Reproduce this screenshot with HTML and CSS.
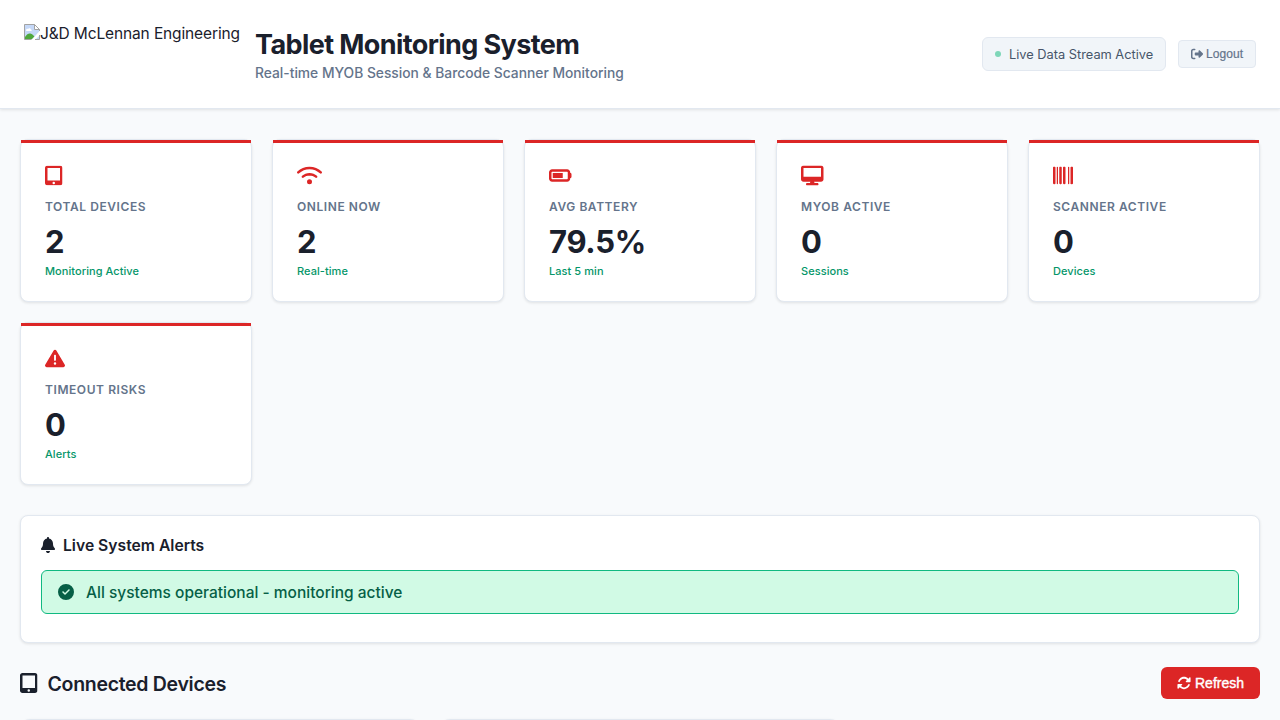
FILE: index.html
```html
<!DOCTYPE html>
<html lang="en">
<head>
<meta charset="utf-8">
<title>Tablet Monitoring System</title>
<link rel="stylesheet" href="styles.css">
</head>
<body>
<svg class="sprite" aria-hidden="true">
  <symbol id="tablet" viewBox="0 0 448 512"><path d="M0 64C0 28.7 28.7 0 64 0H384c35.3 0 64 28.7 64 64V448c0 35.3-28.7 64-64 64H64c-35.3 0-64-28.7-64-64V64zM256 448a32 32 0 1 0 -64 0 32 32 0 1 0 64 0zM384 64H64V384H384V64z"/></symbol>
</svg>
<header class="header">
  <div class="brand">
    <div class="logo">
      <svg class="logo-missing" viewBox="0 0 16 16" width="16" height="16">
        <path d="M.5.5h10l5 5v10H.5z" fill="#c5d8f8"/>
        <path d="M2 6.5c0-1.5 1.3-2 2-1.4.5-1.4 2.7-1.2 2.8.3 1.2 0 1.3 1.6.2 1.6H2.5z" fill="#fff"/>
        <path d="M1 15v-2c2-3 4-4 6-3.2 1.6.5 2.5 1.6 3.5 2.7L8 15z" fill="#4fa83d"/>
        <path d="M16 6.5L7.500 16H11l5-5z" fill="#fff"/>
        <path d="M7.500 15.500H.5V.5h10l5 5V7M15.500 11v4.500H11" fill="none" stroke="#a3a3a3"/>
        <path d="M10.500.5v5h5z" fill="#fff" stroke="#a3a3a3"/>
      </svg><span>J&amp;D McLennan Engineering</span>
    </div>
    <div class="titles">
      <h1>Tablet Monitoring System</h1>
      <p>Real-time MYOB Session &amp; Barcode Scanner Monitoring</p>
    </div>
  </div>
  <div class="actions">
    <div class="status"><span class="dot"></span><span>Live Data Stream Active</span></div>
    <button class="logout"><svg class="icon" width="12" height="12" viewBox="0 0 512 512"><path d="M377.900 105.900L500.700 228.700c7.200 7.200 11.300 17.100 11.300 27.300s-4.100 20.100-11.300 27.300L377.900 406.100c-6.400 6.400-15 9.900-24 9.900c-18.700 0-33.900-15.200-33.900-33.900l0-62.100-128 0c-17.700 0-32-14.300-32-32l0-64c0-17.700 14.300-32 32-32l128 0 0-62.100c0-18.700 15.200-33.900 33.900-33.900c9 0 17.600 3.600 24 9.900zM160 96L96 96c-17.700 0-32 14.300-32 32l0 256c0 17.700 14.300 32 32 32l64 0c17.700 0 32 14.300 32 32s-14.300 32-32 32l-64 0c-53 0-96-43-96-96L0 128C0 75 43 32 96 32l64 0c17.700 0 32 14.300 32 32s-14.300 32-32 32z"/></svg><span>Logout</span></button>
  </div>
</header>
<main class="main">
  <section class="stats">
    <article class="stat">
      <div class="stat-icon"><svg class="icon" width="17.5" height="20"><use href="#tablet"/></svg></div>
      <div class="label">Total Devices</div><div class="value">2</div><div class="note">Monitoring Active</div>
    </article>
    <article class="stat">
      <div class="stat-icon"><svg class="icon" width="25" height="20" viewBox="0 0 640 512"><path d="M54.2 202.900C123.200 136.700 216.800 96 320 96s196.800 40.700 265.800 106.900c12.800 12.200 33 11.800 45.200-.9s11.800-33-.9-45.200C549.700 79.500 440.400 32 320 32S90.300 79.500 9.800 156.700C-2.900 169-3.300 189.200 8.900 202s32.500 13.200 45.200 .9zM320 256c56.800 0 108.600 21.100 148.200 56c13.300 11.700 33.500 10.400 45.200-2.800s10.400-33.500-2.800-45.200C459.800 219.200 393 192 320 192s-139.800 27.200-190.500 72c-13.300 11.700-14.500 31.900-2.800 45.200s31.900 14.500 45.200 2.800c39.500-34.900 91.300-56 148.200-56zm64 160a64 64 0 1 0 -128 0 64 64 0 1 0 128 0z"/></svg></div>
      <div class="label">Online Now</div><div class="value">2</div><div class="note">Real-time</div>
    </article>
    <article class="stat">
      <div class="stat-icon"><svg class="icon" width="22.5" height="20" viewBox="0 0 576 512"><path d="M80 160c-8.800 0-16 7.200-16 16V336c0 8.800 7.200 16 16 16H464c8.800 0 16-7.200 16-16V176c0-8.800-7.200-16-16-16H80zM0 176c0-44.200 35.800-80 80-80H464c44.200 0 80 35.800 80 80v16c17.700 0 32 14.300 32 32v64c0 17.700-14.300 32-32 32v16c0 44.200-35.800 80-80 80H80c-44.200 0-80-35.800-80-80V176zm352 16V320H96V192H352z"/></svg></div>
      <div class="label">Avg Battery</div><div class="value">79.5%</div><div class="note">Last 5 min</div>
    </article>
    <article class="stat">
      <div class="stat-icon"><svg class="icon" width="22.5" height="20" viewBox="0 0 576 512"><path d="M64 0C28.700 0 0 28.700 0 64V352c0 35.300 28.700 64 64 64H240l-10.700 32H160c-17.700 0-32 14.300-32 32s14.300 32 32 32H416c17.700 0 32-14.300 32-32s-14.300-32-32-32H346.700L336 416H512c35.300 0 64-28.700 64-64V64c0-35.300-28.700-64-64-64H64zM512 64V288H64V64H512z"/></svg></div>
      <div class="label">MYOB Active</div><div class="value">0</div><div class="note">Sessions</div>
    </article>
    <article class="stat">
      <div class="stat-icon"><svg class="icon" width="20" height="20" viewBox="0 0 512 512"><path d="M24 32C10.700 32 0 42.700 0 56V456c0 13.300 10.700 24 24 24H40c13.300 0 24-10.700 24-24V56c0-13.300-10.700-24-24-24H24zm88 0c-8.800 0-16 7.200-16 16V464c0 8.800 7.200 16 16 16s16-7.200 16-16V48c0-8.800-7.200-16-16-16zm72 0c-13.300 0-24 10.700-24 24V456c0 13.300 10.700 24 24 24h16c13.300 0 24-10.700 24-24V56c0-13.300-10.700-24-24-24H184zm96 0c-13.300 0-24 10.700-24 24V456c0 13.300 10.700 24 24 24h16c13.300 0 24-10.700 24-24V56c0-13.300-10.700-24-24-24H280zM448 56V456c0 13.300 10.700 24 24 24h16c13.300 0 24-10.700 24-24V56c0-13.300-10.700-24-24-24H472c-13.300 0-24 10.700-24 24zm-64-8V464c0 8.800 7.200 16 16 16s16-7.200 16-16V48c0-8.800-7.200-16-16-16s-16 7.200-16 16z"/></svg></div>
      <div class="label">Scanner Active</div><div class="value">0</div><div class="note">Devices</div>
    </article>
    <article class="stat">
      <div class="stat-icon"><svg class="icon" width="20" height="20" viewBox="0 0 512 512"><path d="M256 32c14.200 0 27.300 7.500 34.500 19.800l216 368c7.300 12.400 7.300 27.700 .2 40.100S486.300 480 472 480H40c-14.300 0-27.600-7.700-34.700-20.100s-7-27.800 .2-40.100l216-368C228.700 39.500 241.800 32 256 32zm0 128c-13.300 0-24 10.700-24 24V296c0 13.300 10.700 24 24 24s24-10.700 24-24V184c0-13.300-10.700-24-24-24zm32 224a32 32 0 1 0 -64 0 32 32 0 1 0 64 0z"/></svg></div>
      <div class="label">Timeout Risks</div><div class="value">0</div><div class="note">Alerts</div>
    </article>
  </section>
  <section class="alerts">
    <h2><svg class="icon" width="14" height="16" viewBox="0 0 448 512"><path d="M224 0c-17.700 0-32 14.300-32 32V51.200C119 66 64 130.600 64 208v18.800c0 47-17.300 92.400-48.500 127.600l-7.400 8.300c-8.400 9.400-10.400 22.900-5.300 34.400S19.400 416 32 416H416c12.600 0 24-7.400 29.200-18.900s3.100-25-5.300-34.400l-7.400-8.300C401.300 319.200 384 273.900 384 226.800V208c0-77.400-55-142-128-156.800V32c0-17.700-14.300-32-32-32zm45.300 493.300c12-12 18.700-28.300 18.700-45.300H224 160c0 17 6.700 33.300 18.700 45.300s28.300 18.700 45.300 18.700s33.300-6.700 45.300-18.700z"/></svg><span>Live System Alerts</span></h2>
    <div class="alert"><svg class="icon" width="16" height="16" viewBox="0 0 512 512"><path d="M256 512A256 256 0 1 0 256 0a256 256 0 1 0 0 512zM369 209L241 337c-9.400 9.400-24.600 9.400-33.900 0l-64-64c-9.400-9.400-9.400-24.600 0-33.900s24.600-9.400 33.900 0l47 47L335 175c9.400-9.400 24.600-9.400 33.900 0s9.400 24.600 0 33.900z"/></svg><span>All systems operational - monitoring active</span></div>
  </section>
  <div class="devices-head">
    <h2><svg class="icon" width="17.5" height="20"><use href="#tablet"/></svg><span>Connected Devices</span></h2>
    <button class="refresh"><svg class="icon" width="14" height="14" viewBox="0 0 512 512"><path d="M142.900 142.900c62.200-62.200 162.700-62.500 225.300-1L327 183c-6.900 6.900-8.900 17.200-5.200 26.200s12.500 14.800 22.200 14.800H472c13.300 0 24-10.700 24-24V72c0-9.700-5.800-18.500-14.800-22.200s-19.300-1.700-26.200 5.200L413.400 96.600c-87.600-86.500-228.700-86.200-315.800 1C73.200 122 55.600 150.700 44.800 181.400c-5.900 16.700 2.900 34.900 19.500 40.800s34.900-2.900 40.800-19.500c7.700-21.800 20.200-42.300 37.800-59.800zM16 312V440c0 9.700 5.800 18.500 14.800 22.200s19.300 1.700 26.200-5.200l41.600-41.600c87.600 86.500 228.700 86.200 315.800-1c24.400-24.400 42.100-53.100 52.900-83.700c5.900-16.700-2.900-34.900-19.500-40.800s-34.900 2.900-40.800 19.500c-7.700 21.800-20.200 42.300-37.800 59.800c-62.200 62.200-162.700 62.500-225.300 1L185 329c6.900-6.900 8.900-17.200 5.200-26.200s-12.500-14.800-22.200-14.800H40c-13.300 0-24 10.700-24 24z"/></svg><span>Refresh</span></button>
  </div>
  <section class="devices"><article class="device"></article><article class="device"></article></section>
</main>
</body>
</html>
```

FILE: styles.css
```css
* { box-sizing: border-box; margin: 0; padding: 0; }
body { background: #f8fafc; color: #1a202c; font-family: Inter, "Liberation Sans", sans-serif; font-size: 16px; }
.sprite { display: none; }
.icon { display: block; flex: none; fill: currentColor; }
button { font-family: "Liberation Sans", Arial, sans-serif; display: flex; align-items: center; }

.header { position: relative; display: flex; justify-content: space-between; height: 109px; padding: 0 24px; background: #fff; border-bottom: 1px solid #e2e8f0; box-shadow: 0 1px 3px rgba(0, 0, 0, .1); }
.brand { display: flex; gap: 15px; }
.logo { display: flex; width: 216px; padding-top: 24px; font-size: 15.5px; line-height: 19px; white-space: nowrap; letter-spacing: -.13px; }
.logo-missing { flex: none; }
.titles { padding-top: 28px; white-space: nowrap; }
.titles h1 { font-size: 27px; line-height: 34px; font-weight: 700; letter-spacing: -.6px; }
.titles p { margin-top: 3px; font-size: 13.8px; line-height: 17px; font-weight: 500; color: #64748b; }
.actions { display: flex; align-items: center; gap: 12px; white-space: nowrap; }
.status { display: flex; align-items: center; gap: 8px; width: 184px; height: 34px; padding: 0 12px; border: 1px solid #e2e8f0; border-radius: 6px; background: #f1f5f9; color: #475569; font-size: 12.8px; }
.dot { flex: none; width: 6px; height: 6px; border-radius: 50%; background: #7ed6b8; }
.logout { gap: 3px; width: 78px; height: 28px; padding: 0 12px; border: 1px solid #e2e8f0; border-radius: 4px; background: #f1f5f9; color: #64748b; font-size: 12px; letter-spacing: .1px; -webkit-text-stroke: .2px currentColor; }

.main { height: 611px; padding: 30px 20px 0; overflow: hidden; }
.stats { display: grid; grid-template-columns: repeat(5, 1fr); gap: 20px; }
.stat { position: relative; height: 163px; padding: 24px; border: 1px solid #e2e8f0; border-radius: 8px; background: #fff; box-shadow: 0 1px 3px rgba(0, 0, 0, .1); }
.stat::before { content: ""; position: absolute; top: 0; left: 0; right: 0; height: 3px; background: #dc2626; }
.stat-icon { display: flex; align-items: center; height: 22px; color: #dc2626; transform: translateY(.4px); }
.label { margin-top: 12px; font-size: 12px; line-height: 18px; font-weight: 600; letter-spacing: .57px; text-transform: uppercase; color: #64748b; }
.value { margin-top: 7px; font-size: 31px; line-height: 38px; font-weight: 700; letter-spacing: -.3px; }
.note { margin-top: 3px; font-size: 11px; line-height: 14px; font-weight: 500; letter-spacing: .06px; color: #059669; }

.alerts { height: 128px; margin-top: 30px; padding: 19px 20px 20px; border: 1px solid #e2e8f0; border-radius: 8px; background: #fff; box-shadow: 0 1px 3px rgba(0, 0, 0, .1); }
.alerts h2 { display: flex; align-items: center; gap: 8px; height: 19px; font-size: 15.7px; font-weight: 600; }
.alerts h2 span { padding-top: 2px; }
.alert { display: flex; align-items: center; gap: 12px; height: 44px; margin-top: 16px; padding: 0 16px; border: 1px solid #10b981; border-radius: 6px; background: #d1fae5; color: #065f46; font-size: 15.5px; font-weight: 500; }

.devices-head { display: flex; align-items: center; justify-content: space-between; height: 32px; margin-top: 24px; }
.devices-head h2 { display: flex; align-items: center; gap: 10px; font-size: 19.5px; font-weight: 600; letter-spacing: -.3px; }
.devices-head h2 span { padding-top: 2px; }
.refresh { gap: 4px; width: 99px; height: 32px; padding: 0 16px; border: 0; border-radius: 6px; background: #dc2626; color: #fff; font-size: 14px; -webkit-text-stroke: .4px currentColor; }
.devices { display: grid; grid-template-columns: repeat(3, 1fr); gap: 20px; margin-top: 20px; }
.device { height: 200px; border: 1px solid #e2e8f0; border-radius: 10px; background: #fff; box-shadow: 0 1px 3px rgba(0, 0, 0, .1); }
```
